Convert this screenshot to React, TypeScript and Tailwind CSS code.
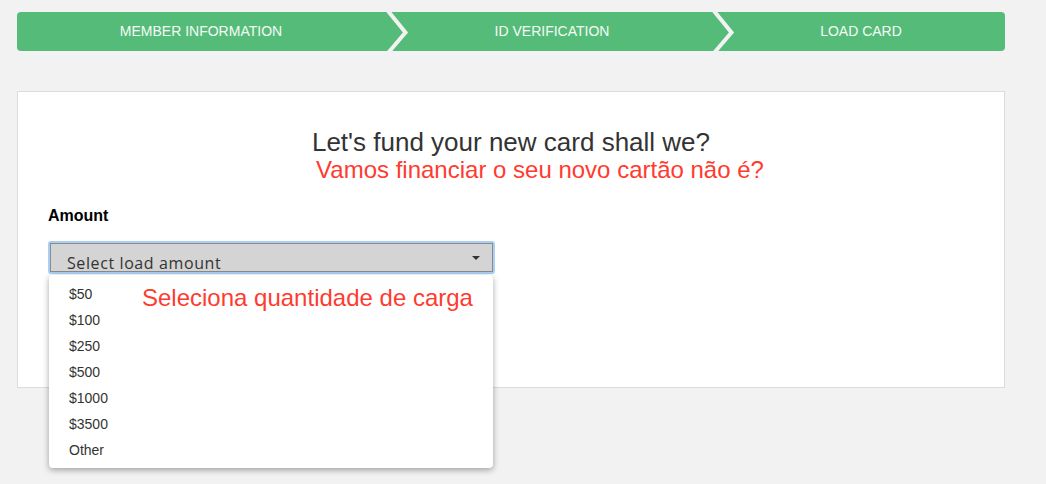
import React from 'react'

const steps = [
  { label: 'MEMBER INFORMATION', width: 'w-[370px]' },
  { label: 'ID VERIFICATION', width: 'w-[326px]' },
  { label: 'LOAD CARD', width: 'flex-1' },
]

const amounts = ['$50', '$100', '$250', '$500', '$1000', '$3500', 'Other']

function Chevron() {
  return (
    <svg
      className="absolute left-full top-0 z-10 -ml-[1px] h-[44px] w-[24px] overflow-visible"
      viewBox="0 0 24 44"
    >
      <polyline points="2,-1 19.5,20.5 2,41" fill="none" stroke="#f2f2f2" strokeWidth="4" />
    </svg>
  )
}

export default function App() {
  return (
    <div className="min-h-screen w-[1046px] h-[484px] overflow-hidden bg-[#f2f2f2] font-['Liberation_Sans',Arial,sans-serif]">
      <div className="px-[17px] pt-[12px] w-[1005px] box-content">
        {/* Stepper */}
        <div className="flex h-[39px] w-[988px] rounded-[4px] bg-[#55bb78] text-white">
          {steps.map((step, i) => (
            <div
              key={step.label}
              className={`relative flex items-center justify-center text-[14px] text-[#f4fbf6] ${step.width}`}
            >
              <span className={i === 0 ? 'pr-[2px]' : 'pl-[4px]'}>{step.label}</span>
              {i < steps.length - 1 && <Chevron />}
            </div>
          ))}
        </div>

        {/* Card */}
        <div className="relative mt-[40px] h-[297px] w-[988px] border border-[#dcdcdc] bg-white">
          <div className="pt-[36px] text-center">
            <h1 className="text-[26px] leading-[28px] text-[#333]">Let's fund your new card shall we?</h1>
            <p className="pl-[58px] text-[24px] leading-[28px] text-[#ff3b30]">
              Vamos financiar o seu novo cartão não é?
            </p>
          </div>

          <div className="pl-[30px] pt-[22px]">
            <label className="block text-[16px] font-bold leading-[20px] text-black">Amount</label>

            <div className="relative mt-[15px] w-[447px]">
              <div className="rounded-[3px] border-[2px] border-[#a9cff5] p-0">
                <div className="relative flex h-[29px] items-end border border-[#8a8a8a] bg-[#d4d4d4] pl-[16px]">
                  <span className="font-['Open_Sans',sans-serif] text-[16px] font-medium leading-[16px] tracking-[0.6px] text-[#333]">
                    Select load amount
                  </span>
                  <span className="absolute right-[12px] top-[12px] h-0 w-0 border-x-[4px] border-t-[4px] border-x-transparent border-t-[#333]" />
                </div>
              </div>

              {/* Dropdown menu */}
              <div className="absolute left-[1px] top-[34px] z-10 w-[444px] rounded-[4px] bg-white pb-[5px] pt-[6px] shadow-[0_2px_6px_rgba(0,0,0,0.35)]">
                {amounts.map((a) => (
                  <div key={a} className="h-[26px] pl-[20px] text-[14px] leading-[26px] text-[#333]">
                    {a}
                  </div>
                ))}
                <span className="absolute left-[93px] top-[9px] text-[24px] leading-[28px] text-[#ff3b30]">
                  Seleciona quantidade de carga
                </span>
              </div>
            </div>
          </div>
        </div>
      </div>
    </div>
  )
}
